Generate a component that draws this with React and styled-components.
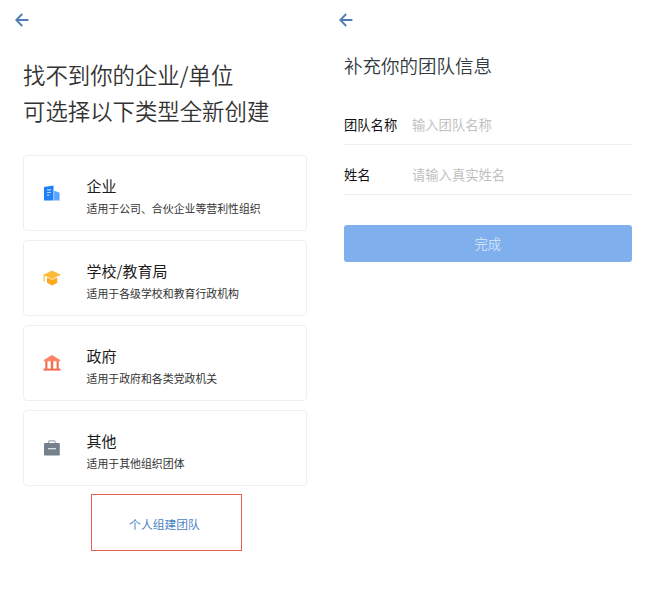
import React from "react";
import styled, { createGlobalStyle } from "styled-components";

const GlobalStyle = createGlobalStyle`
  * {
    box-sizing: border-box;
  }

  body {
    margin: 0;
    background: #fff;
    font-family: "Noto Sans CJK SC", sans-serif;
  }
`;

const Container = styled.div`
  display: flex;
  width: 647px;
  height: 599px;
  overflow: hidden;
  background: #fff;
`;

const Screen = styled.div`
  display: flex;
  flex-direction: column;
  width: ${(props) => props.$width};
  padding: ${(props) => props.$padding};
`;

const Topbar = styled.div`
  display: flex;
  height: 40px;
  margin-left: ${(props) => props.$offset};
  align-items: center;
  flex-shrink: 0;
`;

const BackButton = styled.button`
  display: flex;
  padding: 0;
  border: none;
  background: none;
  cursor: pointer;
`;

const Title = styled.h1`
  margin: 16px 0 0;
  color: #333;
  font-size: 22.4px;
  font-weight: 350;
  line-height: 36px;
  white-space: nowrap;
`;

const CardList = styled.div`
  display: flex;
  margin-top: 27px;
  flex-direction: column;
  gap: 9px;
`;

const Card = styled.div`
  display: flex;
  height: 76.1px;
  padding-left: 19px;
  align-items: center;
  border: 1px solid #efefef;
  border-radius: 4px;
  cursor: pointer;
`;

const CardIcon = styled.div`
  display: flex;
  width: 43.5px;
  flex-shrink: 0;
`;

const CardInfo = styled.div`
  padding-top: 7px;
`;

const CardName = styled.div`
  color: #1c1c1c;
  font-size: 15px;
  line-height: 24px;
`;

const CardDesc = styled.div`
  color: #333;
  font-size: 10.9px;
  line-height: 21px;
  white-space: nowrap;
`;

const PersonalBox = styled.div`
  display: flex;
  width: 151px;
  height: 57px;
  margin: 7.6px 0 0 68px;
  padding: 3px 4px 0 0;
  align-items: center;
  justify-content: center;
  border: 1px solid #ec5f57;
`;

const PersonalLink = styled.div`
  color: #4a82c4;
  font-size: 11.8px;
  cursor: pointer;
`;

const FormTitle = styled.h2`
  margin: 11px 0 0;
  color: #333a42;
  font-size: 18.5px;
  font-weight: 350;
  line-height: 28px;
`;

const Field = styled.label`
  display: flex;
  height: ${(props) => props.$height};
  padding-top: ${(props) => props.$top};
  align-items: center;
  border-bottom: 1px solid #ededed;
`;

const FieldName = styled.span`
  width: 68px;
  color: #111;
  font-size: 13.3px;
`;

const FieldInput = styled.input`
  flex: 1;
  min-width: 0;
  padding: 0;
  border: none;
  outline: none;
  background: none;
  font-family: inherit;
  font-size: 13.3px;

  &::placeholder {
    color: #bfbfc1;
  }
`;

const SubmitButton = styled.button`
  height: 37px;
  margin-top: 30px;
  padding: 0;
  border: none;
  border-radius: 3px;
  background: #7fb0ed;
  color: #cbdff7;
  font-family: inherit;
  font-size: 13.3px;
`;

const BackIcon = () => (
  <svg width="14" height="14" viewBox="0 0 14 14" fill="none">
    <path
      d="M13.4 7H1.5M7.2 1L1.3 7L7.2 13"
      stroke="#4f7cb4"
      strokeWidth="1.8"
    />
  </svg>
);

const CompanyIcon = () => (
  <svg width="18" height="18" viewBox="0 0 18 18">
    <path d="M1 3L10.5 1.5V16.5H1.6Q1 16.5 1 15.9Z" fill="#2080f7" />
    <path d="M11.1 6.8L15.7 8.3Q16.6 8.7 16.6 9.6V16.5H11.1Z" fill="#5ba6ff" />
    <path d="M4 5.9H8M4 8.5H8M4 11.1H6.2" stroke="#b8d7ff" strokeWidth="1.1" />
  </svg>
);

const SchoolIcon = () => (
  <svg width="18" height="18" viewBox="0 0 18 18">
    <path d="M4 8.5H14.2V13.7L9.2 16.6L4 13.7Z" fill="#fba91c" />
    <path d="M9 1.5L18 5.8L9.2 10.2L3 7.4V7H1.7V12.5H.5V5.8Z" fill="#fdbb3b" />
    <path d="M3.5 7.8L9.2 10.6L15 7.8" fill="none" stroke="#fff" strokeWidth=".7" />
  </svg>
);

const GovernmentIcon = () => (
  <svg width="18" height="18" viewBox="0 0 18 18">
    <path d="M9 1L17.2 6V7.2H.8V6Z" fill="#ff8466" />
    <path
      d="M2.3 7H4.4V15H2.3ZM7.8 7H10.2V15H7.8ZM13.6 7H15.7V15H13.6Z"
      fill="#f56b50"
    />
    <path d="M.5 14.6H17.5V16.6H.5Z" fill="#f56b50" />
  </svg>
);

const OtherIcon = () => (
  <svg width="18" height="18" viewBox="0 0 18 18">
    <path
      d="M5.7 4.5V2.6Q5.7 1.9 6.4 1.9H11.3Q12 1.9 12 2.6V4.5"
      fill="none"
      stroke="#a4abb3"
      strokeWidth="1.2"
    />
    <rect x="1" y="3.9" width="15.8" height="12.6" rx="1" fill="#74808c" />
    <path d="M5 9.7H12.9" stroke="#e5e8eb" strokeWidth="1.2" />
  </svg>
);

const teamTypes = [
  { name: "企业", desc: "适用于公司、合伙企业等营利性组织", icon: <CompanyIcon /> },
  { name: "学校/教育局", desc: "适用于各级学校和教育行政机构", icon: <SchoolIcon /> },
  { name: "政府", desc: "适用于政府和各类党政机关", icon: <GovernmentIcon /> },
  { name: "其他", desc: "适用于其他组织团体", icon: <OtherIcon /> },
];

const App = () => {
  return (
    <>
      <GlobalStyle />
      <Container>
        <Screen $width="323px" $padding="0 16.5px 0 23px">
          <Topbar $offset="-8px">
            <BackButton aria-label="返回">
              <BackIcon />
            </BackButton>
          </Topbar>
          <Title>
            找不到你的企业/单位
            <br />
            可选择以下类型全新创建
          </Title>
          <CardList>
            {teamTypes.map((type) => (
              <Card key={type.name}>
                <CardIcon>{type.icon}</CardIcon>
                <CardInfo>
                  <CardName>{type.name}</CardName>
                  <CardDesc>{type.desc}</CardDesc>
                </CardInfo>
              </Card>
            ))}
          </CardList>
          <PersonalBox>
            <PersonalLink>个人组建团队</PersonalLink>
          </PersonalBox>
        </Screen>
        <Screen $width="324px" $padding="0 15.5px 0 21px">
          <Topbar $offset="-5.5px">
            <BackButton aria-label="返回">
              <BackIcon />
            </BackButton>
          </Topbar>
          <FormTitle>补充你的团队信息</FormTitle>
          <Field $height="66px" $top="25px">
            <FieldName>团队名称</FieldName>
            <FieldInput placeholder="输入团队名称" />
          </Field>
          <Field $height="50px" $top="10px">
            <FieldName>姓名</FieldName>
            <FieldInput placeholder="请输入真实姓名" />
          </Field>
          <SubmitButton>完成</SubmitButton>
        </Screen>
      </Container>
    </>
  );
};

export default App;
